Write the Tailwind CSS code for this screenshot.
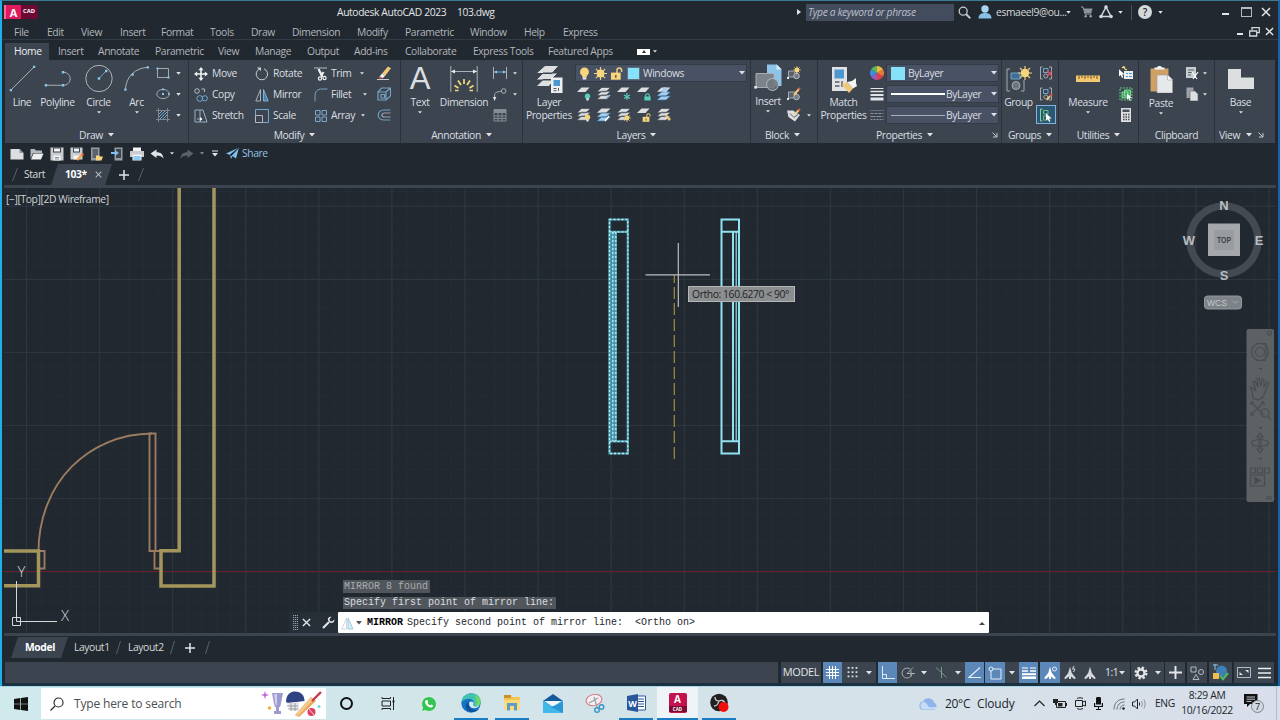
<!DOCTYPE html>
<html lang="en">
<head>
  <meta charset="UTF-8" />
  <meta name="viewport" content="width=device-width, initial-scale=1" />
  <title>Autodesk AutoCAD 2023 - 103.dwg</title>
  <script src="https://cdn.jsdelivr.net/npm/@tailwindcss/browser@4"></script>
</head>
<body class="w-[1280px] h-[720px] overflow-hidden bg-[#22282f] font-['Open_Sans','Noto_Sans',sans-serif] text-[10.3px] tracking-[-0.38px] leading-none text-[#d5d8db]">

  <!-- Icon set -->
  <svg class="hidden">
    <defs>
      <symbol id="tri" viewBox="0 0 6 4"><path d="M0 0h6L3 3.600z" fill="#dfe2e5"/></symbol>
      <symbol id="launch" viewBox="0 0 6 6"><path d="M.5.5l4 4M5 1v4H1" fill="none" stroke="#c8ccd0"/></symbol>
      <symbol id="close" viewBox="0 0 10 10"><path d="M1 1l8 8M9 1L1 9" fill="none" stroke="currentColor" stroke-width="1.500"/></symbol>
      <symbol id="plus" viewBox="0 0 10 10"><path d="M5 0v10M0 5h10" stroke="#e3e5e8" stroke-width="1.500"/></symbol>

      <!-- Draw -->
      <symbol id="line" viewBox="0 0 28 28"><path d="M2 26L26 2" stroke="#aeb4ba"/><path d="M.8 24.800h2.400v2.400H.8zM24.800.8h2.400v2.400h-2.400z" fill="#8ac6ee"/></symbol>
      <symbol id="pline" viewBox="0 0 28 28"><path d="M2 21h18c9 0 10-13 0-13.500" fill="none" stroke="#aeb4ba"/><path d="M.8 19.800h2.400v2.400H.8zM18.500 19.800h2.400v2.400h-2.400zM18.500 6.300h2.400v2.400h-2.400z" fill="#8ac6ee"/></symbol>
      <symbol id="circle" viewBox="0 0 28 28"><circle cx="14" cy="14.500" r="13.200" fill="none" stroke="#aeb4ba"/><path d="M14 14.500l7-7.500" stroke="#5f9fd0"/><path d="M12.800 13.300h2.400v2.400h-2.400zM20 5.800h2.400v2.400H20z" fill="#8ac6ee"/></symbol>
      <symbol id="arc" viewBox="0 0 28 28"><path d="M2.500 25.500C3 12 13 3 25.500 2.500" fill="none" stroke="#aeb4ba"/><path d="M1.300 24.300h2.400v2.400H1.300zM8.800 8.800h2.400v2.400H8.800zM24.500 1.300h2.400v2.400h-2.400z" fill="#8ac6ee"/></symbol>
      <symbol id="rect" viewBox="0 0 14 14"><path d="M1.500 2.500h11v9h-11z" fill="none" stroke="#a3a9b0"/><path d="M.5 1.500h2v2h-2zM11.500 10.500h2v2h-2z" fill="#8ac6ee"/></symbol>
      <symbol id="ellipse" viewBox="0 0 14 14"><ellipse cx="7" cy="7" rx="6.200" ry="4.600" fill="none" stroke="#a3a9b0"/><path d="M6 6h2v2H6zM6 1.600h2v1.600H6zM12.200 6h1.500v2h-1.500z" fill="#8ac6ee"/></symbol>
      <symbol id="hatch" viewBox="0 0 14 14"><path d="M2.500 0v14M11.500 0v14M0 2.500h14M0 11.500h14" stroke="#7f868e"/><path d="M3 6l3-3M3 9l6-6M4 11l7-7M7 11l4-4" stroke="#6fa8d2"/></symbol>

      <!-- Modify -->
      <symbol id="move" viewBox="0 0 14 14"><path d="M7 1v12M1 7h12" stroke="#f0f1f2" stroke-width="1.600"/><path d="M7 0l2.600 3.200H4.400zM7 14l2.600-3.200H4.400zM0 7l3.200-2.600v5.200zM14 7l-3.200-2.600v5.200z" fill="#f0f1f2"/></symbol>
      <symbol id="copy" viewBox="0 0 14 14"><g fill="none"><circle cx="3" cy="3" r="2.300" stroke="#b5bac0"/><path d="M7.500 1h3v3" stroke="#b5bac0"/><circle cx="5.800" cy="10.500" r="2.900" stroke="#6fa8d2"/><circle cx="10.800" cy="10.300" r="2.600" stroke="#6fa8d2"/></g></symbol>
      <symbol id="stretch" viewBox="0 0 14 14"><path d="M1 1h5v12H1zM6 1h3l4 12H6M3 10h5" fill="none" stroke="#9ab0c4"/><path d="M6 8l2.500 2L6 12z" fill="#fff"/></symbol>
      <symbol id="rotate" viewBox="0 0 14 14"><path d="M9 1.800A5.700 5.700 0 1 1 4.500 1.900" fill="none" stroke="#c9cdd1"/><path d="M2 .5h4v3.800z" fill="#c9cdd1"/></symbol>
      <symbol id="mirror" viewBox="0 0 14 14"><path d="M5.500 1.500v11.500H.8z" fill="none" stroke="#a9b0b7"/><path d="M8.500 1.500v11.500h4.700z" fill="#3e84b4" stroke="#8fc0e4" stroke-width=".8"/></symbol>
      <symbol id="scale" viewBox="0 0 14 14"><path d="M.5.5h13v13H.5z" fill="none" stroke="#6fa8d2"/><path d="M.5 6.500h7v7h-7z" fill="#3b444f" stroke="#b5bac0"/></symbol>
      <symbol id="trim" viewBox="0 0 14 14"><path d="M0 1h13" stroke="#b5bac0"/><path d="M4.500 2l4 8M9.500 5L7 9" stroke="#f0f1f2" stroke-width="2.200"/><circle cx="6" cy="11.500" r="1.600" fill="none" stroke="#f0f1f2" stroke-width="1.200"/><circle cx="10.500" cy="11" r="1.600" fill="none" stroke="#f0f1f2" stroke-width="1.200"/></symbol>
      <symbol id="fillet" viewBox="0 0 14 14"><path d="M1 13.500V8C1 3.500 3.500 1 8 1h5.500" fill="none" stroke="#78a4c6"/></symbol>
      <symbol id="array" viewBox="0 0 14 14"><path d="M1.500 1.500h4.500v4.500H1.500zM8 1.500h4.500v4.500H8zM1.500 8h4.500v4.500H1.500zM8 8h4.500v4.500H8z" fill="none" stroke="#7fa9cb"/></symbol>
      <symbol id="erase" viewBox="0 0 14 14"><path d="M0 13.500h12" stroke="#c9cdd1"/><path d="M5 7.500l6-7L14 2.200 8.200 9.800z" fill="#f5c77a"/><path d="M2.500 10.800L5 7.500l3.200 2.300L5.500 12.300z" fill="#f3f3f3"/><path d="M1.500 11.800l2.500 1 1.200-1L2.700 10.200z" fill="#e4573f"/></symbol>
      <symbol id="explode" viewBox="0 0 14 14"><path d="M1 5h8v8H1zM1 5l3.500-4h9v8L9 13M9 5l4.500-4M4 7.500h3.500V11H4z" fill="none" stroke="#78a4c6" stroke-width="1.200"/></symbol>
      <symbol id="offset" viewBox="0 0 14 14"><path d="M13.500 2H6.500C-.5 2-.5 12 6.500 12h7" fill="none" stroke="#6f9dc0" stroke-width="1.200"/><path d="M13.500 5H7.500C4 5 4 9 7.500 9h6" fill="none" stroke="#9aa1a8" stroke-width="1.200"/></symbol>

      <!-- Annotation -->
      <symbol id="dim" viewBox="0 0 28 28"><path d="M.8 1v26M27.200 1v26M1 6.500h26" stroke="#aab0b7"/><path d="M1 6.500l4-2v4zM27 6.500l-4-2v4z" fill="#eceef0"/><path d="M14 14v5M8 15.500l3 4.500M20 15.500l-3 4.500M4.500 20.500l4 2.500M23.500 20.500l-4 2.500M5 25.500h3.500M23 25.500h-3.500" stroke="#f3d77a" stroke-width="1.700"/></symbol>
      <symbol id="lindim" viewBox="0 0 14 14"><path d="M.5 1v12M13.500 1v12" stroke="#aab0b7"/><path d="M1 6h12" stroke="#6fa8d2"/><path d="M1 6l3-1.500v3zM13 6l-3-1.500v3z" fill="#8ac6ee"/></symbol>
      <symbol id="leader" viewBox="0 0 14 14"><path d="M1.500 12V9c0-5 4-3.500 7-5" fill="none" stroke="#aab0b7"/><circle cx="10.700" cy="4" r="2.300" fill="none" stroke="#aab0b7"/><path d="M0 10h3.400l-1.900 4z" fill="#e3e5e8"/></symbol>
      <symbol id="table" viewBox="0 0 14 14"><path d="M1 1.500h12v11.500H1z" fill="none" stroke="#858c94"/><path d="M1 1.500h12v3.500H1z" fill="#858c94"/><path d="M5 5v8M9 5v8M1 8h12M1 10.500h12" stroke="#858c94"/></symbol>

      <!-- Layers -->
      <symbol id="sheets" viewBox="0 0 14 14"><path d="M4.500.5h9L9 4.800H0zM4.500 4.300h9L9 8.600H0zM4.500 8h9L9 12.300H0z" fill="#dcdee0" stroke="#3b444f" stroke-width=".7"/></symbol>
      <symbol id="sheet" viewBox="0 0 14 14"><path d="M4.500.5h8L8.500 5H0z" fill="#dcdee0"/></symbol>
      <symbol id="sheetsblue" viewBox="0 0 14 14"><path d="M4.500.5h9L9 4.800H0z" fill="#dcdee0"/><path d="M4.500 5h9L9 9H0zM4.500 9h9L9 13H0z" fill="#a6d0ee" stroke="#3b6f98" stroke-width=".7"/></symbol>
      <symbol id="layerprops" viewBox="0 0 28 28"><path d="M10 .5h14l-7 8H1zM8 8h15l-7 7H1zM8 14.500h12l-6 7H1z" fill="#dcdee0" stroke="#3b444f"/><path d="M16 12.500h11.500V28H16z" fill="#eceeef"/><path d="M18.500 15h6.500v6h-6.500z" fill="#4b97cf"/><path d="M18.500 23.500h3M18.500 25.700h3M23.500 23v3" stroke="#555c64"/></symbol>
      <symbol id="bulb" viewBox="0 0 14 14"><circle cx="7" cy="5.300" r="4.800" fill="#f6d57c"/><path d="M4.500 8.500h5V11h-5z" fill="#f6d57c"/><path d="M5 11h4v2.500H5z" fill="#e8e8e8"/></symbol>
      <symbol id="sun" viewBox="0 0 14 14"><path d="M7 0v14M0 7h14M2 2l10 10M12 2L2 12" stroke="#f0cf7d" stroke-width="1.200"/><circle cx="7" cy="7" r="4.200" fill="#f6d57c"/></symbol>
      <symbol id="lock" viewBox="0 0 14 14"><path d="M7.500 7V3.500a2.400 2.400 0 0 1 5 0v2" fill="none" stroke="#f0cf7d" stroke-width="1.600"/><path d="M1 6h10.500v7.700H1z" fill="#f6d57c"/><path d="M5.500 8.500h1.500v3H5.500z" fill="#4a5060"/></symbol>
      <symbol id="dot-bulb" viewBox="0 0 6 6"><circle cx="3" cy="2.300" r="2.300" fill="currentColor"/><path d="M2 4h2v2H2z" fill="#e8e8e8"/></symbol>
      <symbol id="dot-lock" viewBox="0 0 6 6"><path d="M1.500 3V1.700a1.500 1.500 0 0 1 3 0V3" fill="none" stroke="currentColor"/><path d="M.3 2.600h5.400V6H.3z" fill="currentColor"/></symbol>

      <!-- Block -->
      <symbol id="insert" viewBox="0 0 28 28"><path d="M13 .5h10l4.500 4.500v17H13z" fill="#8fc4ea"/><path d="M22.500.5v5h5z" fill="#d9edf9"/><path d="M2 9.500h18v14H2z" fill="#7d838b" stroke="#a9adb2"/><circle cx="18.500" cy="20.500" r="6" fill="#70767e" fill-opacity=".85" stroke="#b6babf"/><path d="M.3 22h2.600v2.600H.3z" fill="#e8e8e8"/></symbol>
      <symbol id="blk" viewBox="0 0 14 14"><path d="M1.500 5h8v6h-8z" fill="#59616b" stroke="#a5abb1"/><circle cx="9.500" cy="10" r="2.800" fill="#747b84" stroke="#b6babf"/><path d="M0 11h2v2H0z" fill="#e8e8e8"/></symbol>

      <!-- Properties -->
      <symbol id="match" viewBox="0 0 28 28"><path d="M2 2h15v24H2z" fill="#e0e2e4"/><path d="M4.500 4.500H14v9H4.500z" fill="#4b97cf"/><path d="M5 17h4.500M5 21h4.500M12 16v6" stroke="#555c64" stroke-width="1.300"/><path d="M12 20l5-3 6 6.500-4 4.500z" fill="#f0c878"/><path d="M17 17l5-1 4-3v5l1 3-4 2.500z" fill="#f4f4f4"/></symbol>

      <symbol id="cursor" viewBox="0 0 8 10"><path d="M0 0v8.500l2-1.800L3.500 10 5 9.300 3.600 6.200H6.500z" fill="#fff"/></symbol>
      <symbol id="grp" viewBox="0 0 14 14"><path d="M3.500 1H1.500v12h2M10 1h2.500v12H10" fill="none" stroke="#a5abb1"/><path d="M4.500 2.500h4.500v4h-4.500z" fill="none" stroke="#6fa8d2"/><circle cx="6.800" cy="10" r="2" fill="none" stroke="#a5abb1"/></symbol>

      <symbol id="scaleA" viewBox="0 0 14 14"><path d="M7 .8L8.800 7l4 5-1.200 1.200L8 10.500V13H6v-2.500l-3.600 2.700L1.200 12l4-5z" fill="currentColor"/></symbol>
    </defs>
  </svg>

  <div class="flex flex-col w-[1280px] h-[686px] border-t border-t-[#3a7a92] border-l-2 border-l-[#1fb0ea] border-r-2 border-r-[#1163b0]">

    <!-- Title bar -->
    <header class="flex items-center h-[22px] shrink-0 pl-[2px]">
      <div class="flex items-center h-[14px] w-[34px] bg-[#6b0a32] rounded-[1px]">
        <div class="flex items-center justify-center w-[17px] h-[14px] bg-[#e01a5c] border-l-2 border-l-[#f26a95] text-white font-bold text-[11px] tracking-normal">A</div>
        <span class="pl-[2px] text-white font-bold text-[5.8px] tracking-normal">CAD</span>
      </div>
      <span class="w-[120px] ml-[299px] whitespace-nowrap text-[#e3e5e8]">Autodesk AutoCAD 2023</span>
      <span class="w-[340px] text-[#e3e5e8]">103.dwg</span>
      <svg class="w-[4px] h-[6px] shrink-0" viewBox="0 0 4 6"><path d="M0 0l4 3-4 3z" fill="#e3e5e8"/></svg>
      <div class="flex items-center w-[148px] h-[17px] ml-[5px] pl-[2px] bg-[#434c5d] italic text-[#b9bec8] shrink-0">Type a keyword or phrase</div>
      <svg class="w-[13px] h-[13px] ml-[4px] shrink-0" viewBox="0 0 13 13"><circle cx="5.200" cy="5.200" r="4" fill="none" stroke="#c9cdd1" stroke-width="1.300"/><path d="M8 8l4.300 4.300" stroke="#c9cdd1" stroke-width="1.800"/></svg>
      <svg class="w-[14px] h-[14px] ml-[7px] shrink-0" viewBox="0 0 14 14"><circle cx="7" cy="4" r="3.700" fill="#a8d4f2"/><path d="M.5 13.500C.5 9 4 8 7 8s6.500 1 6.500 5.500z" fill="#86bfe8"/></svg>
      <span class="w-[71px] ml-[4px] shrink-0 whitespace-nowrap">esmaeel9@ou...</span>
      <svg class="w-[5px] h-[3px] shrink-0 -ml-[1px]"><use href="#tri"/></svg>
      <svg class="w-[12px] h-[12px] ml-[10px] shrink-0" viewBox="0 0 12 12"><path d="M0 1h2l2 7h6.500" fill="none" stroke="#9aa1a8"/><path d="M2.500 2.500H11.500L10.300 7H4z" fill="#8d949c"/><circle cx="4.700" cy="10.300" r="1.200" fill="#9aa1a8"/><circle cx="9.700" cy="10.300" r="1.200" fill="#9aa1a8"/></svg>
      <svg class="w-[14px] h-[14px] ml-[6px] shrink-0" viewBox="0 0 14 14"><path d="M7 2L2 11.500h10z" fill="none" stroke="#d5d8db" stroke-width="1.500"/><circle cx="7" cy="2" r="1.800" fill="#d5d8db"/><circle cx="2" cy="11.500" r="1.800" fill="#d5d8db"/><circle cx="12" cy="11.500" r="1.800" fill="#d5d8db"/></svg>
      <svg class="w-[5px] h-[3px] ml-[5px] shrink-0"><use href="#tri"/></svg>
      <span class="w-px h-[15px] ml-[8px] bg-[#4b525b] shrink-0"></span>
      <span class="flex items-center justify-center w-[14px] h-[14px] ml-[6px] rounded-full bg-[#d5d8db] text-[#22282f] font-semibold text-[10px] tracking-normal shrink-0">?</span>
      <svg class="w-[5px] h-[3px] ml-[6px] shrink-0"><use href="#tri"/></svg>
      <span class="w-[7px] h-[2px] ml-[59px] mt-[4px] bg-[#e3e5e8] shrink-0"></span>
      <span class="w-[11px] h-[10px] ml-[12px] border border-t-2 border-[#b5bac0] shrink-0"></span>
      <svg class="w-[10px] h-[10px] ml-[9px] text-[#e3e5e8] shrink-0"><use href="#close"/></svg>
    </header>

    <!-- Menu bar -->
    <nav class="flex items-center h-[17px] shrink-0 pl-[12px] pt-[2px] border-b border-[#333b45] text-[#b1b6bc]">
      <span class="w-[33px]">File</span><span class="w-[34px]">Edit</span><span class="w-[39px]">View</span><span class="w-[41px]">Insert</span><span class="w-[49px]">Format</span><span class="w-[41px]">Tools</span><span class="w-[41px]">Draw</span><span class="w-[65px]">Dimension</span><span class="w-[48px]">Modify</span><span class="w-[65px]">Parametric</span><span class="w-[54px]">Window</span><span class="w-[39px]">Help</span><span>Express</span>
      <span class="w-[6px] h-[2px] ml-auto mt-[4px] bg-[#e3e5e8]"></span>
      <svg class="w-[11px] h-[10px] ml-[6px] -mt-px" viewBox="0 0 11 10"><path d="M3 3V.7h7.300v5H8M.7 4h7v5h-7z" fill="none" stroke="#d5d8db" stroke-width="1.300"/></svg>
      <svg class="w-[9px] h-[9px] ml-[5px] mr-[4px] -mt-px text-[#e3e5e8]"><use href="#close"/></svg>
    </nav>

    <!-- Ribbon tabs -->
    <nav class="flex items-center h-[20px] shrink-0 pl-[3px] pt-[3px] text-[#b1b6bc]">
      <span class="flex items-center pl-[9px] w-[44px] h-[17px] mr-[9px] bg-[#3b444f] text-[#eceef0]">Home</span><span class="w-[40px]">Insert</span><span class="w-[57px]">Annotate</span><span class="w-[63px]">Parametric</span><span class="w-[37px]">View</span><span class="w-[52px]">Manage</span><span class="w-[47px]">Output</span><span class="w-[51px]">Add-ins</span><span class="w-[68px]">Collaborate</span><span class="w-[75px]">Express Tools</span><span class="w-[89px]">Featured Apps</span>
      <span class="flex items-center justify-center w-[13px] h-[6px] bg-white"><svg class="w-[4px] h-[3px]" viewBox="0 0 4 3"><path d="M0 3h4L2 0z" fill="#333"/></svg></span>
      <svg class="w-[4px] h-[3px] ml-[3px]"><use href="#tri"/></svg>
    </nav>

    <!-- Ribbon -->
    <section class="flex h-[83px] shrink-0 ml-[3px] mr-[3px] bg-[#3b444f] text-[#dcdfe2] whitespace-nowrap">

      <!-- Draw -->
      <div class="flex flex-col w-[184px] border-r border-[#2b323b]">
        <div class="flex h-[66px]">
          <div class="flex flex-col items-center w-[34px] pt-[5px]"><svg class="w-[27px] h-[27px]"><use href="#line"/></svg><span class="mt-[5px]">Line</span></div>
          <div class="flex flex-col items-center w-[37px] pt-[5px]"><svg class="w-[27px] h-[27px]"><use href="#pline"/></svg><span class="mt-[5px]">Polyline</span></div>
          <div class="flex flex-col items-center w-[45px] pt-[4px]"><svg class="w-[28px] h-[28px]"><use href="#circle"/></svg><span class="mt-[5px]">Circle</span><svg class="w-[4px] h-[3px] mt-[4px]"><use href="#tri"/></svg></div>
          <div class="flex flex-col items-center w-[31px] pt-[5px]"><svg class="w-[27px] h-[27px]"><use href="#arc"/></svg><span class="mt-[5px]">Arc</span><svg class="w-[4px] h-[3px] mt-[4px]"><use href="#tri"/></svg></div>
          <div class="flex flex-col gap-[7px] pt-[6px] pl-[4px]">
            <div class="flex items-center gap-[6px]"><svg class="w-[14px] h-[14px]"><use href="#rect"/></svg><svg class="w-[5px] h-[3px]"><use href="#tri"/></svg></div>
            <div class="flex items-center gap-[6px]"><svg class="w-[14px] h-[14px]"><use href="#ellipse"/></svg><svg class="w-[5px] h-[3px]"><use href="#tri"/></svg></div>
            <div class="flex items-center gap-[6px]"><svg class="w-[14px] h-[14px]"><use href="#hatch"/></svg><svg class="w-[5px] h-[3px]"><use href="#tri"/></svg></div>
          </div>
        </div>
        <div class="flex items-center justify-center gap-[5px] h-[17px] pt-px">Draw<svg class="w-[6px] h-[4px]"><use href="#tri"/></svg></div>
      </div>

      <!-- Modify -->
      <div class="flex flex-col w-[212px] border-r border-[#2b323b]">
        <div class="flex h-[66px] pt-[3px]">
          <div class="w-[60px] pl-[5px]">
            <div class="flex items-center h-[21px] gap-[4px]"><svg class="w-[14px] h-[14px]"><use href="#move"/></svg>Move</div>
            <div class="flex items-center h-[21px] gap-[4px]"><svg class="w-[14px] h-[14px]"><use href="#copy"/></svg>Copy</div>
            <div class="flex items-center h-[21px] gap-[4px]"><svg class="w-[14px] h-[14px]"><use href="#stretch"/></svg>Stretch</div>
          </div>
          <div class="w-[60px] pl-[6px]">
            <div class="flex items-center h-[21px] gap-[4px]"><svg class="w-[14px] h-[14px]"><use href="#rotate"/></svg>Rotate</div>
            <div class="flex items-center h-[21px] gap-[4px]"><svg class="w-[14px] h-[14px]"><use href="#mirror"/></svg>Mirror</div>
            <div class="flex items-center h-[21px] gap-[4px]"><svg class="w-[14px] h-[14px]"><use href="#scale"/></svg>Scale</div>
          </div>
          <div class="w-[58px] pl-[5px]">
            <div class="flex items-center h-[21px] gap-[3px]"><svg class="w-[14px] h-[14px]"><use href="#trim"/></svg>Trim<svg class="w-[4px] h-[3px] ml-auto mr-[3px]"><use href="#tri"/></svg></div>
            <div class="flex items-center h-[21px] gap-[3px]"><svg class="w-[14px] h-[14px]"><use href="#fillet"/></svg>Fillet<svg class="w-[4px] h-[3px] ml-auto"><use href="#tri"/></svg></div>
            <div class="flex items-center h-[21px] gap-[3px]"><svg class="w-[14px] h-[14px]"><use href="#array"/></svg>Array<svg class="w-[4px] h-[3px] ml-auto mr-[2px]"><use href="#tri"/></svg></div>
          </div>
          <div class="flex flex-col gap-[7px] pl-[10px] pt-[3px]"><svg class="w-[14px] h-[14px]"><use href="#erase"/></svg><svg class="w-[14px] h-[14px]"><use href="#explode"/></svg><svg class="w-[14px] h-[14px]"><use href="#offset"/></svg></div>
        </div>
        <div class="flex items-center justify-center gap-[5px] h-[17px] pt-px">Modify<svg class="w-[6px] h-[4px]"><use href="#tri"/></svg></div>
      </div>

      <!-- Annotation -->
      <div class="flex flex-col w-[122px] border-r border-[#2b323b]">
        <div class="flex h-[66px]">
          <div class="flex flex-col items-center w-[38px] pt-[5px]"><span class="h-[28px] leading-[27px] font-['Liberation_Sans',sans-serif] text-[31px] tracking-normal">A</span><span class="mt-[4px]">Text</span><svg class="w-[4px] h-[3px] mt-[4px]"><use href="#tri"/></svg></div>
          <div class="flex flex-col items-center w-[50px] pt-[5px]"><svg class="w-[28px] h-[28px]"><use href="#dim"/></svg><span class="mt-[4px]">Dimension</span></div>
          <div class="flex flex-col gap-[7px] pt-[6px] pl-[4px]">
            <div class="flex items-center gap-[6px]"><svg class="w-[14px] h-[14px]"><use href="#lindim"/></svg><svg class="w-[4px] h-[3px]"><use href="#tri"/></svg></div>
            <div class="flex items-center gap-[6px]"><svg class="w-[14px] h-[14px]"><use href="#leader"/></svg><svg class="w-[4px] h-[3px]"><use href="#tri"/></svg></div>
            <svg class="w-[14px] h-[14px]"><use href="#table"/></svg>
          </div>
        </div>
        <div class="flex items-center justify-center gap-[5px] h-[17px] pt-px">Annotation<svg class="w-[6px] h-[4px]"><use href="#tri"/></svg></div>
      </div>

      <!-- Layers -->
      <div class="flex flex-col w-[228px] border-r border-[#2b323b]">
        <div class="flex h-[66px]">
          <div class="flex flex-col items-center w-[52px] pt-[5px]"><svg class="w-[28px] h-[28px]"><use href="#layerprops"/></svg><span class="mt-[4px]">Layer</span><span class="mt-[3px]">Properties</span></div>
          <div class="pt-[4px]">
            <div class="flex items-center w-[172px] h-[18px] pl-[2px] bg-[#485264] border border-[#333b47]">
              <svg class="w-[13px] h-[13px]"><use href="#bulb"/></svg>
              <svg class="w-[13px] h-[13px] ml-[3px]"><use href="#sun"/></svg>
              <svg class="w-[13px] h-[13px] ml-[3px]"><use href="#lock"/></svg>
              <span class="w-[13px] h-[13px] ml-[4px] bg-[#86e2fb] border border-[#62707c]"></span>
              <span class="ml-[3px]">Windows</span>
              <svg class="w-[6px] h-[4px] ml-auto mr-px"><use href="#tri"/></svg>
            </div>
            <div class="flex gap-[6px] pl-[2px] mt-[5px]">
              <svg class="w-[14px] h-[14px]"><use href="#sheet"/><use href="#dot-bulb" x="7" y="6" width="7" height="8" class="text-[#58cdb8]"/></svg>
              <svg class="w-[14px] h-[14px]"><use href="#sheets"/><path d="M13 8l-4 4" stroke="#7fb5dc" stroke-width="1.500"/></svg>
              <svg class="w-[14px] h-[14px]"><use href="#sheet"/><path d="M10 6v7M7 8l6 3.500M13 8l-6 3.500" stroke="#58cdb8" stroke-width="1.200"/></svg>
              <svg class="w-[14px] h-[14px]"><use href="#sheet"/><use href="#dot-lock" x="7" y="6" width="7" height="8" class="text-[#58cdb8]"/></svg>
              <svg class="w-[14px] h-[14px]"><use href="#sheetsblue"/><circle cx="8" cy="3" r="2.700" fill="#a6d0ee"/></svg>
            </div>
            <div class="flex gap-[6px] pl-[2px] mt-[7px]">
              <svg class="w-[14px] h-[14px]"><use href="#sheets"/><use href="#dot-bulb" x="7" y="6" width="7" height="8" class="text-[#f6d57c]"/></svg>
              <svg class="w-[14px] h-[14px]"><use href="#sheetsblue"/><path d="M8 13l4-5" stroke="#fff" stroke-width="1.300"/></svg>
              <svg class="w-[14px] h-[14px]"><use href="#sheets"/><use href="#sun" x="6" y="6" width="8" height="8"/></svg>
              <svg class="w-[14px] h-[14px]"><use href="#sheet"/><use href="#lock" x="5" y="5" width="9" height="9"/></svg>
              <svg class="w-[14px] h-[14px]"><use href="#sheets"/><path d="M8 8l2-1 4 4-2 2z" fill="#f0c878"/></svg>
            </div>
          </div>
        </div>
        <div class="flex items-center justify-center gap-[5px] h-[17px] pt-px">Layers<svg class="w-[6px] h-[4px]"><use href="#tri"/></svg></div>
      </div>

      <!-- Block -->
      <div class="flex flex-col w-[67px] border-r border-[#2b323b]">
        <div class="flex h-[66px]">
          <div class="flex flex-col items-center w-[34px] pt-[4px]"><svg class="w-[28px] h-[28px]"><use href="#insert"/></svg><span class="mt-[4px]">Insert</span><svg class="w-[4px] h-[3px] mt-[4px]"><use href="#tri"/></svg></div>
          <div class="flex flex-col gap-[7px] pt-[6px] pl-[2px]">
            <svg class="w-[14px] h-[14px]"><use href="#blk"/><use href="#sun" x="6" y="0" width="8" height="8"/></svg>
            <svg class="w-[14px] h-[14px]"><use href="#blk"/><path d="M7 8l5-6" stroke="#f0c878" stroke-width="2"/><path d="M11.500 2.500L13 .8" stroke="#e4573f" stroke-width="2"/></svg>
            <div class="flex items-center gap-[6px]"><svg class="w-[14px] h-[14px]" viewBox="0 0 14 14"><path d="M0 2.500h6l7 4.500-5 6.500L1.500 9z" fill="#dcdee0"/><path d="M3 5.500l4 4 4-3" fill="none" stroke="#59616b"/><path d="M8 6l4-4" stroke="#f0c878" stroke-width="2"/><path d="M11.500 2.500L13 .8" stroke="#e4573f" stroke-width="2"/></svg><svg class="w-[4px] h-[3px]"><use href="#tri"/></svg></div>
          </div>
        </div>
        <div class="flex items-center justify-center gap-[5px] h-[17px] pt-px pr-[3px]">Block<svg class="w-[6px] h-[4px]"><use href="#tri"/></svg></div>
      </div>

      <!-- Properties -->
      <div class="flex flex-col w-[184px] border-r border-[#2b323b]">
        <div class="flex h-[66px]">
          <div class="flex flex-col items-center w-[51px] pt-[5px]"><svg class="w-[28px] h-[28px]"><use href="#match"/></svg><span class="mt-[4px]">Match</span><span class="mt-[3px]">Properties</span></div>
          <div class="flex flex-col items-center gap-[7px] w-[16px] pt-[6px]">
            <svg class="w-[14px] h-[14px]" viewBox="0 0 14 14"><path d="M7 7V0a7 7 0 0 1 6 3.500z" fill="#f0b93c"/><path d="M7 7l6-3.500a7 7 0 0 1 0 7z" fill="#ec7a37"/><path d="M7 7l6 3.500A7 7 0 0 1 7 14z" fill="#dd3f4d"/><path d="M7 7v7a7 7 0 0 1-6-3.500z" fill="#9b58c0"/><path d="M7 7l-6 3.500a7 7 0 0 1 0-7z" fill="#3b8ee0"/><path d="M7 7L1 3.500A7 7 0 0 1 7 0z" fill="#55b560"/></svg>
            <svg class="w-[14px] h-[14px]" viewBox="0 0 14 14"><path d="M.5 1.500h13" stroke="#e3e5e8"/><path d="M.5 4.500h13" stroke="#e3e5e8" stroke-width="1.500"/><path d="M.5 8h13" stroke="#e3e5e8" stroke-width="2"/><path d="M.5 12h13" stroke="#e3e5e8" stroke-width="3"/></svg>
            <svg class="w-[14px] h-[14px]" viewBox="0 0 14 14"><path d="M.5 2.500h13" stroke="#8d949c" stroke-dasharray="1 1"/><path d="M.5 5.500h13" stroke="#8d949c" stroke-dasharray="3 1"/><path d="M.5 8.500h13" stroke="#8d949c" stroke-dasharray="5 1"/><path d="M.5 11.500h13" stroke="#8d949c" stroke-dasharray="2 1"/></svg>
          </div>
          <div class="flex flex-col gap-[3px] pt-[4px] pl-px">
            <div class="flex items-center w-[113px] h-[18px] pl-[4px] bg-[#485264] border border-[#333b47]"><span class="w-[14px] h-[13px] bg-[#86e2fb]"></span><span class="ml-[3px]">ByLayer</span><svg class="w-[6px] h-[4px] ml-auto mr-px"><use href="#tri"/></svg></div>
            <div class="flex items-center w-[113px] h-[18px] pl-[4px] bg-[#485264] border border-[#333b47]"><span class="w-[54px] h-[2px] bg-white"></span><span class="ml-px">ByLayer</span><svg class="w-[6px] h-[4px] ml-auto mr-px"><use href="#tri"/></svg></div>
            <div class="flex items-center w-[113px] h-[18px] pl-[4px] bg-[#485264] border border-[#333b47]"><span class="w-[54px] h-px bg-[#a9aeb8]"></span><span class="ml-px">ByLayer</span><svg class="w-[6px] h-[4px] ml-auto mr-px"><use href="#tri"/></svg></div>
          </div>
        </div>
        <div class="flex items-center h-[17px] pt-px pl-[58px]">Properties<svg class="w-[6px] h-[4px] ml-[5px]"><use href="#tri"/></svg><svg class="w-[6px] h-[6px] ml-auto mr-[3px]"><use href="#launch"/></svg></div>
      </div>

      <!-- Groups -->
      <div class="flex flex-col w-[57px] border-r border-[#2b323b]">
        <div class="flex h-[66px]">
          <div class="flex flex-col items-center w-[33px] pt-[5px]"><svg class="w-[28px] h-[28px]" viewBox="0 0 28 28"><path d="M5 4H2v22h3M16 26h3V15" fill="none" stroke="#a5abb1"/><path d="M6 8h9v6H6z" fill="#426d90" stroke="#6fa8d2"/><circle cx="11" cy="20.500" r="4" fill="#70767e" stroke="#a5abb1"/><use href="#sun" x="13" y="1" width="14" height="14"/></svg><span class="mt-[4px]">Group</span></div>
          <div class="flex flex-col items-center w-[22px] pt-[6px]">
            <svg class="w-[14px] h-[14px]"><use href="#grp"/><path d="M8 5l5 5M13 5l-5 5" stroke="#dc4c64" stroke-width="1.500"/></svg>
            <svg class="w-[14px] h-[14px] mt-[7px]"><use href="#grp"/><path d="M8 13l3-4" stroke="#f0c878" stroke-width="2"/><path d="M11 9l2-2" stroke="#e4573f" stroke-width="2"/></svg>
            <div class="flex items-center justify-center w-[20px] h-[19px] mt-[4px] bg-[#2c5672] border border-[#7fb5dc]"><svg class="w-[14px] h-[14px]"><path d="M3.500 1H1.500v12h2" fill="none" stroke="#8fd0a0"/><path d="M4.500 2.500h4.500v3.500H4.500zM4.500 8h4v4h-4z" fill="none" stroke="#5fc57d"/><use href="#cursor" x="7" y="5" width="7" height="9"/></svg></div>
          </div>
        </div>
        <div class="flex items-center justify-center gap-[5px] h-[17px] pt-px">Groups<svg class="w-[6px] h-[4px]"><use href="#tri"/></svg></div>
      </div>

      <!-- Utilities -->
      <div class="flex flex-col w-[80px] border-r border-[#2b323b]">
        <div class="flex h-[66px]">
          <div class="flex flex-col items-center w-[58px] pt-[5px]"><svg class="w-[28px] h-[28px]" viewBox="0 0 28 28"><path d="M2 10.500h24v6.500H2z" fill="#f3c86f"/><path d="M5 11v3M8 11v2M11 11v3M14 11v2M17 11v3M20 11v2M23 11v3" stroke="#6d5526"/></svg><span class="mt-[4px]">Measure</span><svg class="w-[4px] h-[3px] mt-[4px]"><use href="#tri"/></svg></div>
          <div class="flex flex-col gap-[7px] pt-[6px] pl-[2px]">
            <svg class="w-[14px] h-[14px]"><path d="M5 5h9v8H5z" fill="#eceef0"/><path d="M7 7.500h2M10 7.500h3M7 10.500h2M10 10.500h3" stroke="#4b97cf"/><use href="#cursor" x="0" y="3" width="7" height="9"/><path d="M3 2l2-1.500L6 3l2 1" fill="none" stroke="#f6d57c" stroke-width="1.300"/></svg>
            <svg class="w-[14px] h-[14px]"><path d="M1 1h12v12H1z" fill="none" stroke="#5fc57d" stroke-dasharray="2 1"/><path d="M3 5h6v6H3zM5.500 3h6v6h-6z" fill="#46a766" stroke="#7edc98"/><use href="#cursor" x="8" y="6" width="6" height="8"/></svg>
            <svg class="w-[14px] h-[14px]" viewBox="0 0 14 14"><path d="M2 0h10v14H2z" fill="#dcdee0"/><path d="M3.500 1.500h7v2.500h-7z" fill="#4b525b"/><path d="M4 6.500h7M4 9h7M4 11.500h7" stroke="#4b525b" stroke-width="1.400" stroke-dasharray="1.500 1"/></svg>
          </div>
        </div>
        <div class="flex items-center justify-center gap-[5px] h-[17px] pt-px">Utilities<svg class="w-[6px] h-[4px]"><use href="#tri"/></svg></div>
      </div>

      <!-- Clipboard -->
      <div class="flex flex-col w-[76px] border-r border-[#2b323b]">
        <div class="flex h-[66px]">
          <div class="flex flex-col items-center w-[44px] pt-[5px]"><svg class="w-[28px] h-[28px]" viewBox="0 0 28 28"><path d="M3.500 3.500h18v23h-18z" fill="#cf9f64"/><path d="M7.500 4.500V2.500H10C10.500.5 14.500.5 15 2.500h2.500v2z" fill="#f4f4f4"/><path d="M10 10h11l4.500 4.500v13.500H10z" fill="#e6e8e9" stroke="#9a9ea3" stroke-width=".6"/><path d="M20.500 10v5h5z" fill="#fff" stroke="#9a9ea3" stroke-width=".6"/></svg><span class="mt-[5px]">Paste</span><svg class="w-[4px] h-[3px] mt-[4px]"><use href="#tri"/></svg></div>
          <div class="flex flex-col gap-[7px] pt-[6px] pl-[2px]">
            <div class="flex items-center gap-[4px]"><svg class="w-[14px] h-[14px]" viewBox="0 0 14 14"><path d="M1 1h10v11H1z" fill="#c9cdd1"/><path d="M3 4h6M3 6.500h4M3 9h3" stroke="#59616b"/><path d="M7 6l5 7M13 6l-5 7" stroke="#fff" stroke-width="1.200"/></svg><svg class="w-[4px] h-[3px]"><use href="#tri"/></svg></div>
            <div class="flex items-center gap-[4px]"><svg class="w-[14px] h-[14px]" viewBox="0 0 14 14"><path d="M1.500.5h7v10.500h-7z" fill="#9da3a9"/><path d="M5 4h5l3 3v7H5z" fill="#dcdee0" stroke="#59616b" stroke-width=".6"/></svg><svg class="w-[4px] h-[3px]"><use href="#tri"/></svg></div>
          </div>
        </div>
        <div class="flex items-center justify-center h-[17px] pt-px">Clipboard</div>
      </div>

      <!-- View -->
      <div class="flex flex-col w-[60px]">
        <div class="flex flex-col items-center h-[66px] pt-[5px] pr-[9px]"><svg class="w-[28px] h-[28px]" viewBox="0 0 28 28"><path d="M1 4h13v8.500h13V24H1z" fill="#dcdee0"/></svg><span class="mt-[4px]">Base</span><svg class="w-[4px] h-[3px] mt-[4px]"><use href="#tri"/></svg></div>
        <div class="flex items-center h-[17px] pt-px pl-[4px]">View<svg class="w-[6px] h-[4px] ml-[6px]"><use href="#tri"/></svg><svg class="w-[6px] h-[6px] ml-[6px]"><use href="#launch"/></svg></div>
      </div>
    </section>

    <!-- Quick access toolbar -->
    <section class="flex items-center h-[21px] shrink-0 pl-[8px] gap-[6px]">
      <svg class="w-[14px] h-[14px]" viewBox="0 0 14 14"><path d="M.5 2h9l4 4v6.500H.5z" fill="#dcdee0"/><path d="M9.500 2v4h4z" fill="#8d949c"/></svg>
      <svg class="w-[14px] h-[14px]" viewBox="0 0 14 14"><path d="M.5 2h4l1.500 1.500h6V6H3L.5 12z" fill="#b5bac0"/><path d="M3.500 6.500h10l-2.500 6H1z" fill="#eceef0"/></svg>
      <svg class="w-[14px] h-[14px]" viewBox="0 0 14 14"><path d="M.5.5h13v13H.5z" fill="#c9cdd1"/><path d="M3 .5h8v5H3z" fill="#3d444d"/><path d="M4 1.500h6v3H4zM3.500 8.500h7v5h-7z" fill="#f4f4f4"/><path d="M5 10.500h4M5 12h4" stroke="#8d949c"/></svg>
      <svg class="w-[14px] h-[14px]" viewBox="0 0 14 14"><path d="M.5.5h12v12H.5z" fill="#c9cdd1"/><path d="M3 .5h7v5H3z" fill="#3d444d"/><path d="M4 1.500h5v3H4zM3.500 8.500H9v4H3.500z" fill="#f4f4f4"/><path d="M7 13l5-5" stroke="#f0a84a" stroke-width="2.400"/><path d="M12 8l1.500-1.500" stroke="#e4573f" stroke-width="2.400"/></svg>
      <svg class="w-[14px] h-[14px]" viewBox="0 0 14 14"><path d="M1 .5h8.500v13H1z" fill="#969ca3"/><path d="M2.500 2H8v9H2.500z" fill="#5a626c"/><path d="M6 8.500h3l1 1h3l-1.500 4H6z" fill="#f6d57c"/></svg>
      <svg class="w-[14px] h-[14px]" viewBox="0 0 14 14"><path d="M4.500.5h8v13h-8z" fill="#969ca3"/><path d="M6 2h5v9H6z" fill="#3d444d"/><path d="M1 5h4V3l4 3-4 3V7H1z" fill="#7fc0ee"/></svg>
      <svg class="w-[14px] h-[14px]" viewBox="0 0 14 14"><path d="M3 .5h8V4H3z" fill="#f4f4f4"/><path d="M0 4h14v6H0z" fill="#c9cdd1"/><path d="M2.500 7.500h9v6h-9z" fill="#f4f4f4"/><path d="M3.500 9h7v4h-7z" fill="#8fcbf0"/></svg>
      <svg class="w-[14px] h-[14px]" viewBox="0 0 14 14"><path d="M.5 6.500L6.500 2.500v2.700c4.500 0 6.500 2 7 6.300-1.500-2-3.500-3-7-3v2.500z" fill="#e3e5e8"/></svg>
      <svg class="w-[4px] h-[3px]"><use href="#tri"/></svg>
      <svg class="w-[14px] h-[14px]" viewBox="0 0 14 14"><path d="M13.500 6.500l-6-4v2.700c-4.500 0-6.500 2-7 6.300 1.500-2 3.500-3 7-3v2.500z" fill="#59616b"/></svg>
      <svg class="w-[4px] h-[3px] opacity-60"><use href="#tri"/></svg>
      <svg class="w-[6px] h-[7px] ml-[2px]" viewBox="0 0 6 7"><path d="M0 1h6" stroke="#e3e5e8"/><path d="M0 3h6L3 6.500z" fill="#e3e5e8"/></svg>
      <span class="flex items-center gap-[3px] ml-[2px] text-[#8ec4e8]"><svg class="w-[13px] h-[13px]" viewBox="0 0 13 13"><path d="M0 6.500L13 .5 10 11.500 6.500 9 5 12 4 8z" fill="#7fc0ee"/><path d="M4 8l9-7.500L5 9" stroke="#22282f" stroke-width=".6"/></svg>Share</span>
    </section>

    <!-- Drawing tabs -->
    <section class="flex items-center h-[21px] shrink-0">
      <svg class="w-[6px] h-[13px] ml-[10px]" viewBox="0 0 6 13"><path d="M5.500 0L.5 13" stroke="#59616b"/></svg>
      <span class="w-[27px] ml-[6px]">Start</span>
      <div class="flex items-center h-[21px] w-[61px] pl-[14px] bg-[#3b444f] text-white font-bold [clip-path:polygon(7px_0,100%_0,54px_100%,0_100%)]"><span class="w-[30px]">103*</span><svg class="w-[7px] h-[7px] text-[#b5bac0]"><use href="#close"/></svg></div>
      <svg class="w-[10px] h-[10px] ml-[7px]"><use href="#plus"/></svg>
      <svg class="w-[6px] h-[13px] ml-[9px]" viewBox="0 0 6 13"><path d="M5.500 0L.5 13" stroke="#59616b"/></svg>
    </section>
    <div class="h-[3px] shrink-0 ml-[2px] mr-[2px] bg-[#3b444f]"></div>

    <!-- Model space -->
    <main class="relative h-[445px] shrink-0 ml-[2px] mr-[2px] overflow-hidden bg-[#212830]">
      <svg class="block w-[1272px] h-[445px]" viewBox="4 188 1272 445">
        <defs>
          <pattern id="minor" x="26" y="205.800" width="14.620" height="14.620" patternUnits="userSpaceOnUse"><path d="M0 .5h14.620M.5 0v14.620" stroke="#242b34"/></pattern>
          <pattern id="major" x="26" y="205.800" width="73.080" height="73.080" patternUnits="userSpaceOnUse"><path d="M0 .5h73.080M.5 0v73.080" stroke="#2e3640"/></pattern>
        </defs>
        <path d="M4 188h1272v445H4z" fill="url(#minor)"/>
        <path d="M4 188h1272v445H4z" fill="url(#major)"/>
        <path d="M4 571.500h1272" stroke="#6a2029"/>

        <!-- Door -->
        <g fill="none" stroke="#9c7b5f" stroke-width="1.900">
          <path d="M38.500 551C39 483 88 434 152 433.500"/>
          <path d="M149.500 433.500h6V551h-6zM154.500 551h6.500v17.500h-6.500zM39 551h5.500v17.500H39z"/>
        </g>
        <!-- Walls -->
        <g fill="none" stroke="#a3955c" stroke-width="3.500">
          <path d="M179.200 188v362.800h-18.200V586h53V188"/>
          <path d="M4 551h34.500v34.800H4"/>
        </g>

        <!-- Selected window -->
        <path d="M608.800 232h7.600v209h-7.600z" fill="#43899a"/>
        <g fill="none" stroke="#4fa3b5" stroke-width="2.200"><path d="M609.500 219.500h18.300v234h-18.300zM609.500 231.800h18.300M609.500 441.300h18.300M612.800 232v209M615.800 232v209"/></g>
        <g fill="none" stroke="#b9eef7" stroke-width="1.300" stroke-dasharray="2 2"><path d="M609.500 219.500h18.300v234h-18.300zM609.500 231.800h18.300M609.500 441.300h18.300M612.800 232v209M615.800 232v209"/></g>

        <!-- Mirrored preview -->
        <g fill="none" stroke="#8fe3f0" stroke-width="2"><path d="M721.500 219.500h17.500v234h-17.500zM721.500 231.800h17.500M721.500 441.300h17.500M733 232v209"/><path d="M736.200 232v209" stroke-width="1.200"/></g>

        <!-- Rubber band and cursor -->
        <path d="M674.300 275v185" stroke="#9a873f" stroke-width="1.300" stroke-dasharray="12 4" stroke-dashoffset="4"/>
        <path d="M678.300 243v64M645.500 274.800h64.500" stroke="#b9bebf" stroke-width="1.200"/>

        <!-- UCS icon -->
        <g fill="none" stroke="#d5d8db"><path d="M16.500 581v40.500H57M12.500 617.500h8v8h-8z"/></g>
        <text x="17.500" y="577" font-size="15" font-weight="300" letter-spacing="0" fill="#d5d8db">Y</text>
        <text x="61" y="621" font-size="15" font-weight="300" letter-spacing="0" fill="#d5d8db">X</text>

        <!-- View cube -->
        <circle cx="1224" cy="240" r="34" fill="none" stroke="#434a52" stroke-width="7.500"/>
        <path d="M1208 223.500h32V256h-32z" fill="#a5a8aa"/>
        <path d="M1214 230h20v20h-20z" fill="#999c9f"/>
        <g font-family="Liberation Sans" font-weight="700" text-anchor="middle" letter-spacing="0" fill="#b9bdc0" font-size="13">
          <text x="1224" y="209.500">N</text><text x="1224" y="280">S</text><text x="1189" y="244.500">W</text><text x="1259" y="244.500">E</text>
        </g>
        <text x="1224" y="243" font-family="Liberation Sans" font-weight="700" font-size="8.500" letter-spacing="0" text-anchor="middle" textLength="14" lengthAdjust="spacingAndGlyphs" fill="#3d4349">TOP</text>
        <rect x="1204.500" y="296" width="37" height="13" rx="3" fill="#7d8388" stroke="#93989c"/>
        <text x="1207" y="305.500" font-family="Liberation Sans" font-size="8.500" letter-spacing="0" fill="#c5c9cc">WCS</text>
        <path d="M1233 301l2.500 2 2.500-2" fill="none" stroke="#a5a9ad"/>

        <!-- Navigation bar -->
        <rect x="1246.500" y="329" width="27.500" height="173" rx="2" fill="#5d6164"/>
        <g fill="none" stroke="#474d52" stroke-width="1.200">
          <circle cx="1269.500" cy="333" r="2"/>
          <circle cx="1260" cy="352" r="8.500"/><circle cx="1260" cy="352" r="4.500"/><path d="M1256 343.500h10M1256 360.500h10M1266 343v16"/>
          <path d="M1252 391l-2-4 3 1 3 3-3-9 2-1 3 6-1-8 2-1 2 8 1-7 2 1v7l3-5 2 1-4 9-2 5-5 3-5-2z"/>
          <path d="M1251 402l13 13M1264 402l-13 13M1251 405v-3h3M1261 402h3v3M1251 412v3h3"/><circle cx="1265" cy="413" r="4"/><path d="M1268 416l3 4"/>
          <ellipse cx="1260" cy="443" rx="8.500" ry="3.500"/><path d="M1260 433l3 4h-2v12h2l-3 4-3-4h2v-12h-2z"/>
          <path d="M1250.500 468h5v5h-5zM1257.500 468h5v5h-5zM1264.500 468h5v5h-5zM1250.500 475h14v11h-14z"/><path d="M1255 477.500l5 3-5 3z" fill="#474d52"/>
          <path d="M1266 497h6M1266 499h6"/>
        </g>
        <path d="M1258.500 368h4l-2 2zM1258.500 427h4l-2 2zM1258.500 458h4l-2 2z" fill="#444a4f"/>
      </svg>

      <div class="absolute left-[2px] top-[5px] leading-[12px] text-[#d0d3d6]">[−][Top][2D Wireframe]</div>
      <div class="absolute left-[684px] top-[98px] flex items-center w-[107px] h-[16px] pl-[3px] bg-[#8b8e8f] border border-[#b4b6b7] text-[#1f2328] whitespace-nowrap">Ortho: 160.6270 &lt; 90°</div>

      <!-- Command line -->
      <div class="absolute left-[339px] top-[392px] font-['Liberation_Mono',monospace] text-[10px] leading-[12px] tracking-normal">
        <div class="w-[87px] pl-px pt-px bg-[#50565b] text-[#a7abae]">MIRROR 8 found</div>
        <div class="w-[213px] pl-px mt-[4px] bg-[#50565b] text-[#dcdee0] whitespace-nowrap">Specify first point of mirror line:</div>
      </div>
      <div class="absolute left-[286px] top-[424px] flex items-center w-[700px] h-[21px]">
        <div class="flex items-center w-[48px] h-[21px] pl-[3px] bg-[#262e38]">
          <svg class="w-[5px] h-[15px]" viewBox="0 0 5 15"><path d="M.7 0v15M2.700 0v15M4.700 0v15" stroke="#b5bac0" stroke-dasharray="1 1"/></svg>
          <svg class="w-[9px] h-[9px] ml-[4px] text-[#e3e5e8]"><use href="#close"/></svg>
          <svg class="w-[13px] h-[13px] ml-[11px]" viewBox="0 0 13 13"><path d="M1 12l6-6" stroke="#e3e5e8" stroke-width="2.200"/><path d="M12.300 3.500L10 5.500 8 5l-.5-2L9.500.8C7 .3 5.500 2 6 4.500L8.500 7c2.500.5 4.300-1 3.800-3.500z" fill="#e3e5e8"/></svg>
        </div>
        <div class="flex items-center w-[651px] h-[21px] pl-[3px] pr-[4px] pt-px rounded-[1px] bg-white font-['Liberation_Mono',monospace] text-[10px] tracking-normal text-[#22272c] whitespace-pre">
          <svg class="w-[13px] h-[13px]" viewBox="0 0 13 13"><path d="M5.500 1v11H.8z" fill="none" stroke="#d0d6da"/><path d="M7 1v11h5z" fill="#d3edf6" stroke="#9fcbdc"/></svg>
          <svg class="w-[6px] h-[4px] ml-[2px] mr-[5px]" viewBox="0 0 6 4"><path d="M0 0h6L3 3.600z" fill="#555"/></svg>
          <span class="w-[40px] font-bold text-black">MIRROR</span><span>Specify second point of mirror line:  &lt;Ortho on&gt;</span>
          <svg class="w-[6px] h-[3px] ml-auto" viewBox="0 0 6 3"><path d="M0 3h6L3 0z" fill="#444"/></svg>
        </div>
      </div>
    </main>
    <div class="h-[3px] shrink-0 ml-[2px] mr-[2px] bg-[#3b444f]"></div>

    <!-- Layout tabs -->
    <section class="flex items-center h-[25px] shrink-0 pl-[9px] pb-[2px]">
      <div class="flex items-center h-[21px] w-[57px] pl-[14px] bg-[#3b444f] text-white font-bold [clip-path:polygon(7px_0,100%_0,50px_100%,0_100%)]">Model</div>
      <span class="w-[42px] ml-[6px]">Layout1</span>
      <svg class="w-[5px] h-[13px]" viewBox="0 0 5 13"><path d="M4.500 0L.5 13" stroke="#59616b"/></svg>
      <span class="w-[42px] ml-[7px]">Layout2</span>
      <svg class="w-[5px] h-[13px]" viewBox="0 0 5 13"><path d="M4.500 0L.5 13" stroke="#59616b"/></svg>
      <svg class="w-[10px] h-[10px] ml-[10px]"><use href="#plus"/></svg>
      <svg class="w-[5px] h-[13px] ml-[10px]" viewBox="0 0 5 13"><path d="M4.500 0L.5 13" stroke="#59616b"/></svg>
    </section>

    <!-- Status bar -->
    <footer class="flex h-[21px] shrink-0 pl-[3px] mt-px text-[#e3e5e8]">
      <div class="w-[773px] bg-[#3b444f]"></div>
      <div class="flex items-center justify-center w-[40px] ml-[3px] pb-[2px] bg-[#3b444f] text-[11px]">MODEL</div>
      <div class="flex items-center justify-center w-[19px] ml-[2px] bg-[#5b88b8]"><svg class="w-[13px] h-[13px]" viewBox="0 0 13 13"><path d="M3.500 0v13M6.500 0v13M9.500 0v13M0 3.500h13M0 6.500h13M0 9.500h13" stroke="#fff"/></svg></div>
      <div class="flex items-center w-[34px] pl-[5px] bg-[#3b444f]"><svg class="w-[11px] h-[11px]" viewBox="0 0 11 11"><path d="M1.500 0v11M5.500 0v11M9.500 0v11" stroke="#dfe2e5" stroke-width="1.800" stroke-dasharray="1.800 2.400"/></svg><svg class="w-[6px] h-[4px] ml-[8px]"><use href="#tri"/></svg></div>
      <div class="flex items-center justify-center w-[19px] ml-[2px] bg-[#5b88b8]"><svg class="w-[14px] h-[14px]" viewBox="0 0 14 14"><path d="M1.500 0v12.500H14M1.500 8.500h4v4" fill="none" stroke="#dfeaf4"/></svg></div>
      <div class="flex items-center w-[34px] pl-[4px] bg-[#3b444f]"><svg class="w-[14px] h-[14px]" viewBox="0 0 14 14"><path d="M9 3A5 5 0 1 0 11 8M6 7.500h8M6 7.500l6-6M10 4.500v6" fill="none" stroke="#a9aeb4"/></svg><svg class="w-[6px] h-[4px] ml-[6px]"><use href="#tri"/></svg></div>
      <div class="flex items-center w-[34px] pl-[4px] bg-[#3b444f]"><svg class="w-[13px] h-[13px]" viewBox="0 0 13 13"><path d="M6.500 1v11" stroke="#69a872"/><path d="M1 1.500l5.500 5 5 5" fill="none" stroke="#858c94"/></svg><svg class="w-[6px] h-[4px] ml-[7px]"><use href="#tri"/></svg></div>
      <div class="flex items-center justify-center w-[19px] bg-[#5b88b8]"><svg class="w-[13px] h-[13px]" viewBox="0 0 13 13"><path d="M12 1.500L1 11.500h12" fill="none" stroke="#e6eef6" stroke-width="1.200"/></svg></div>
      <div class="flex items-center justify-center w-[20px] ml-px bg-[#5b88b8]"><svg class="w-[14px] h-[14px]" viewBox="0 0 14 14"><path d="M5 3h8v10H3V5" fill="none" stroke="#e6eef6"/><circle cx="3" cy="3" r="2" fill="none" stroke="#e6eef6"/></svg></div>
      <div class="flex items-center justify-center w-[14px] bg-[#3b444f]"><svg class="w-[6px] h-[4px]"><use href="#tri"/></svg></div>
      <div class="flex items-center justify-center w-[19px] bg-[#5b88b8]"><svg class="w-[14px] h-[12px]" viewBox="0 0 14 12"><path d="M0 1h6M8 1h6" stroke="#fff"/><path d="M0 4h6M8 4h6" stroke="#fff" stroke-width="1.500"/><path d="M0 7.200h14" stroke="#fff" stroke-width="2"/><path d="M0 10.700h14" stroke="#fff" stroke-width="2.500"/></svg></div>
      <div class="flex items-center justify-center w-[20px] ml-[2px] bg-[#5b88b8]"><svg class="w-[14px] h-[14px] text-white"><use href="#scaleA"/><circle cx="11.500" cy="3" r="2" fill="none" stroke="#e6eef6"/></svg></div>
      <div class="flex items-center w-[70px] pl-[3px] bg-[#3b444f]">
        <svg class="w-[14px] h-[14px] text-[#d5d8db]"><use href="#scaleA"/><path d="M11 0l-1.500 3H12l-1.500 3" fill="none" stroke="#d5d8db"/></svg>
        <svg class="w-[14px] h-[14px] ml-[6px] text-[#d5d8db]"><use href="#scaleA"/></svg>
        <span class="w-[14px] ml-[8px] pb-px">1:1</span>
        <svg class="w-[6px] h-[4px]"><use href="#tri"/></svg>
      </div>
      <div class="flex items-center w-[33px] pl-[3px] ml-px bg-[#3b444f]"><svg class="w-[14px] h-[14px]" viewBox="0 0 14 14"><circle cx="7" cy="7" r="5.300" fill="none" stroke="#e3e5e8" stroke-width="2.400" stroke-dasharray="2.400 1.760"/><circle cx="7" cy="7" r="3.500" fill="none" stroke="#e3e5e8" stroke-width="2.300"/></svg><svg class="w-[6px] h-[4px] ml-[7px]"><use href="#tri"/></svg></div>
      <div class="flex items-center justify-center w-[20px] ml-px bg-[#3b444f]"><svg class="w-[13px] h-[13px]"><use href="#plus"/></svg></div>
      <div class="flex items-center justify-center w-[20px] ml-[2px] bg-[#3b444f]"><svg class="w-[14px] h-[14px]" viewBox="0 0 14 14"><path d="M1 1h5v5H1zM6 8.500L9 13.500H3z" fill="none" stroke="#b5bac0"/><circle cx="11" cy="6" r="2.500" fill="none" stroke="#b5bac0"/></svg></div>
      <div class="flex items-center justify-center w-[23px] ml-[2px] bg-[#3b444f]"><svg class="w-[17px] h-[17px]" viewBox="0 0 17 17"><circle cx="9.500" cy="7" r="5.500" fill="#3f7fb8"/><path d="M1 1h5M3 0v6" stroke="#8fc4ea"/><path d="M1 9h6v6H1z" fill="#f0bf4c"/><path d="M8 12l3 3 5-6" fill="none" stroke="#4fb763" stroke-width="2.400"/></svg></div>
      <div class="flex items-center w-[40px] pl-[3px] ml-[2px] bg-[#3b444f]"><svg class="w-[14px] h-[11px]" viewBox="0 0 14 11"><path d="M.5.5h13v10H.5z" fill="none" stroke="#b5bac0"/><path d="M8 3h3.500v3zM6 8H2.500V5z" fill="#e3e5e8"/></svg><svg class="w-[13px] h-[12px] ml-[7px]" viewBox="0 0 13 12"><path d="M0 1.500h13M0 6h13M0 10.500h13" stroke="#eceef0" stroke-width="1.500"/></svg></div>
    </footer>
    <div class="grow bg-[#1c313f]"></div>
  </div>

  <!-- Windows taskbar -->
  <footer class="flex items-center w-[1280px] h-[34px] border-t border-[#a9d8ee] bg-linear-to-r from-[#cfe9ec] via-[#d3e4e9] to-[#d9deea] text-[#20262b]">
    <div class="flex items-center justify-center w-[41px]"><svg class="w-[14px] h-[14px]" viewBox="0 0 14 14"><path d="M0 2l6.300-.9v5.600H0zM7 1l7-1v6.700H7zM0 7.300h6.300v5.600L0 12zM7 7.300h7V14l-7-1z" fill="#111"/></svg></div>
    <div class="flex items-center w-[285px] h-[31px] pl-[9px] bg-white">
      <svg class="w-[14px] h-[14px]" viewBox="0 0 14 14"><circle cx="8.500" cy="5.500" r="4.500" fill="none" stroke="#2b2f33" stroke-width="1.200"/><path d="M5 9L.5 13.500" stroke="#2b2f33" stroke-width="1.200"/></svg>
      <span class="w-[187px] ml-[10px] text-[12px] tracking-[-0.15px] text-[#4a4f54]">Type here to search</span>
      <svg class="w-[62px] h-[28px]" viewBox="0 0 62 28"><path d="M4 1l1 3 3 1-3 1-1 3-1-3-3-1 3-1z" fill="#c767dd"/><circle cx="8.500" cy="18" r="1.800" fill="#eeb53a"/><path d="M11 3h11l-2.500 13-1.500 1.500V21h2v3h-7v-3h2v-3.500L13.500 16z" fill="#9b9bd0"/><path d="M13 4h3v11h-1.500z" fill="#d0d0ee"/><path d="M25 12C25 4 30 1.500 34 1.500c6 0 9.500 4 9.500 9.500L27 13z" fill="#2e4482"/><path d="M26 13l12-1v8c-6 3-11 0-12-7z" fill="#e8e6e6"/><path d="M26 16h11M27 19h10M30 13v8M34 13v8" stroke="#8b9098" stroke-width=".8"/><path d="M34 25L50 7l5 4-17 16z" fill="#e8a860"/><path d="M35 24L50 7l3 2-16 17z" fill="#f6c98a"/><path d="M51 11l9-9" stroke="#c23a50" stroke-width="2.400"/><circle cx="50.500" cy="22" r="4" fill="#dc3e60"/><path d="M48 19l5 6" stroke="#fff" stroke-width=".8"/><circle cx="58" cy="16.500" r="1.500" fill="#6fd3e4"/></svg>
    </div>
    <div class="flex items-center justify-center w-[41px]"><span class="w-[13px] h-[13px] rounded-full border-2 border-[#111]"></span></div>
    <div class="flex items-center justify-center w-[41px]"><svg class="w-[14px] h-[13px]" viewBox="0 0 14 13"><path d="M1 1.500V0M1 1.500h8.500V0M1 11.500V13M1 11.500h8.500V13M1 4h8.500v5H1zM12.500 0v13" fill="none" stroke="#222"/><path d="M11.500 3.500h2v2h-2z" fill="#222"/></svg></div>
    <div class="flex items-center justify-center w-[42px]"><svg class="w-[16px] h-[16px]" viewBox="0 0 16 16"><path d="M.5 15.500l1-4A7.400 7.400 0 1 1 4.500 14.500z" fill="#35c355" stroke="#e9f7ec" stroke-width=".8"/><path d="M5 4.200l1.300-.2.900 2-.7 1c.7 1.300 1.500 2 2.700 2.500l1-1.100 1.900.9c0 1.900-1.600 2.500-2.900 2.200C6.500 10.800 4.300 8.500 4 6c0-.8.400-1.400 1-1.800z" fill="#fff"/></svg></div>
    <div class="flex flex-col items-center w-[41px] h-[33px] pt-[6px]"><svg class="w-[20px] h-[20px]" viewBox="0 0 20 20"><circle cx="10" cy="10" r="9.700" fill="#1673c4"/><path d="M.5 9C1.500 3 6 .3 10.500.3c6 0 9.200 4.500 9.200 8 0 3.200-2.500 5-5.200 5-2.300 0-3-1-2.300-2.100C13.500 8 11 5.500 7.500 5.700 4 6 1.500 7.500.5 9z" fill="#40c3b0"/><path d="M13 2c4 1 6.700 3.500 6.700 6.300 0 3.200-2.500 5-5.200 5 2-3 1-8-1.500-11.300z" fill="#70d968"/><path d="M8 9.500c-1 4 2 7.500 6 7.500 1.500 0 3-.5 4-1-3 4-10 4-12.500 0C4 13 5 10 8 9.500z" fill="#0d4f9e"/><path d="M8.500 9c1.500-1.200 4-.6 4 1.300 0 1-1 1.600-.3 2.400 1.300 1.400 4.500.8 6.500-.7-1 3.500-8 4.500-10 1-.8-1.400-.8-3-.2-4z" fill="#d7e9ec"/></svg><span class="w-[34px] h-[2px] mt-auto bg-[#1a7dc4]"></span></div>
    <div class="flex flex-col items-center w-[41px] h-[33px] pt-[7px]"><svg class="w-[18px] h-[18px]" viewBox="0 0 18 18"><path d="M1 1h7l1 2h8v12H1z" fill="#f5c64f"/><path d="M1 1h7v3H1z" fill="#c9922c"/><path d="M1 6h16v10H1z" fill="#fbdb7b"/><path d="M4 16.500V9h10v7.500h-3V12H7v4.500z" fill="#5d9cc4"/></svg><span class="w-[34px] h-[2px] mt-auto bg-[#1a7dc4]"></span></div>
    <div class="flex items-center justify-center w-[42px]"><svg class="w-[20px] h-[20px]" viewBox="0 0 20 20"><path d="M0 7l10-7 10 7z" fill="#175a9c"/><path d="M0 7h20v12H0z" fill="#3aaee4"/><path d="M1.500 7h17L10 13z" fill="#f2f6f8"/><path d="M0 8l10 6 10-6v11H0z" fill="#40b8ea"/><path d="M20 8v11L8 13z" fill="#2b95d6"/></svg></div>
    <div class="flex items-center justify-center w-[41px]"><svg class="w-[20px] h-[20px]" viewBox="0 0 20 20"><ellipse cx="9" cy="6" rx="8" ry="5.500" fill="#f4eef0" stroke="#d4727f" transform="rotate(-12 9 6)"/><path d="M9 3l3 10M4 9l9-5" stroke="#9aa1a8" stroke-width="1.300"/><g fill="none" stroke="#3a96c8" stroke-width="1.400"><circle cx="12" cy="16" r="2.300"/><circle cx="16.500" cy="13" r="2.300"/></g></svg></div>
    <div class="flex flex-col items-center w-[42px] h-[33px] pt-[7px]"><svg class="w-[19px] h-[18px]" viewBox="0 0 19 18"><path d="M9 2h9.500v14H9z" fill="#fff" stroke="#2b579a"/><path d="M11 5h6M11 7.500h6M11 10h6M11 12.500h6" stroke="#2b579a"/><path d="M0 2l11-2v18L0 16z" fill="#2b579a"/><text x="5.500" y="12.500" font-size="9" font-weight="700" text-anchor="middle" letter-spacing="0" fill="#fff">W</text></svg><span class="w-[34px] h-[2px] mt-auto bg-[#1a7dc4]"></span></div>
    <div class="flex flex-col items-center w-[41px] h-[33px] pt-[6px] bg-[#eef4f7]"><div class="flex flex-col items-center justify-center w-[18px] h-[20px] rounded-[2px] bg-[#c3124c] text-white font-bold tracking-normal"><span class="text-[10px]">A</span><span class="w-full mt-[2px] pt-px bg-[#7c0a35] text-center text-[4.5px]">CAD</span></div><span class="w-[41px] h-[2px] mt-auto bg-[#1a7dc4]"></span></div>
    <div class="flex flex-col items-center w-[42px] h-[33px] pt-[6px]"><svg class="w-[19px] h-[20px]" viewBox="0 0 19 20"><circle cx="9" cy="9.500" r="8.800" fill="#23201f"/><path d="M5 4c0 3 2 4 4 4 2-1 5-1 6 2M9 8c-1 2-1 5-5 5" fill="none" stroke="#c9cdd1" stroke-width="1.300"/><circle cx="13.500" cy="14" r="5" fill="#f20d0d"/></svg><span class="w-[34px] h-[2px] mt-auto bg-[#1a7dc4]"></span></div>

    <!-- Tray -->
    <svg class="w-[20px] h-[14px] ml-[178px]" viewBox="0 0 20 14"><path d="M5 13a4.300 4.300 0 0 1 0-8.500A6 6 0 0 1 16 5.500a4 4 0 0 1 0 7.500z" fill="#8fb4ea"/><path d="M5 12.500a4 4 0 0 1 0-7.500c3 0 4 2 5 4s5 1 9 1c-.5 2-1.500 2.500-3 2.500z" fill="#c8dcf7"/></svg>
    <span class="w-[32px] ml-[7px] text-[12px] tracking-[-0.3px]">20°C</span><span class="w-[57px] text-[12px] tracking-[-0.15px]">Cloudy</span>
    <svg class="w-[11px] h-[7px]" viewBox="0 0 11 7"><path d="M.5 6l5-5 5 5" fill="none" stroke="#222" stroke-width="1.200"/></svg>
    <svg class="w-[14px] h-[12px] ml-[8px]" viewBox="0 0 14 12"><path d="M3.500 3.500h9v6h-9z" fill="none" stroke="#222"/><path d="M5 5h4.500v3.500H5zM12.500 5h1.500v3h-1.500zM0 1h5v4H3v2H2V5H0z" fill="#222"/></svg>
    <svg class="w-[12px] h-[13px] ml-[7px]" viewBox="0 0 12 13"><path d="M1.500 3.500h7v6h-7zM8.500 5l3-1v5l-3-1M3 1.500C5 .5 7 .5 9 1.500M3 11.500c2 1 4 1 6 0" fill="none" stroke="#222"/></svg>
    <svg class="w-[9px] h-[13px] ml-[8px]" viewBox="0 0 9 13"><path d="M2 2a2 2 0 0 1 5 0v5.500H2zM0 6h1.200v3h6.600V6H9v4H5v2h2v1H2v-1h2v-2H0z" fill="#111"/></svg>
    <svg class="w-[12px] h-[12px] ml-[10px]" viewBox="0 0 12 12"><path d="M1 11.500C1 5 5 1 11.500 1M4 11.500C4 7 7 4 11.500 4M7 11.500C7 9 9 7 11.500 7" fill="none" stroke="#6a7076"/><circle cx="10.500" cy="10.500" r="1.300" fill="#222"/></svg>
    <svg class="w-[14px] h-[12px] ml-[7px]" viewBox="0 0 14 12"><path d="M.5 4h2L5.500 1v10l-3-3h-2z" fill="none" stroke="#222"/><path d="M7.500 4.500v3" stroke="#222"/><path d="M9.500 3c1 2 1 4 0 6M12 1.500c1.500 3 1.500 6 0 9" fill="none" stroke="#8d949c"/></svg>
    <span class="w-[26px] ml-[9px] whitespace-nowrap">ENG</span>
    <div class="flex flex-col items-center w-[52px] pb-px leading-[15px] tracking-[-0.3px] whitespace-nowrap"><span>8:29 AM</span><span>10/16/2022</span></div>
    <div class="relative w-[20px] h-[20px] ml-[11px]">
      <svg class="w-[14px] h-[14px]" viewBox="0 0 14 14"><path d="M0 0h13.500v10H6l-3 3v-3H0z" fill="#111"/><path d="M2.500 3h8.500M2.500 5.200h8.500M2.500 7.400h5" stroke="#d9deea" stroke-width=".9"/></svg>
      <span class="absolute left-[7px] top-[6px] flex items-center justify-center w-[13px] h-[13px] rounded-full border border-[#7e858c] bg-[#d3d8e2] text-[9px] tracking-normal">7</span>
    </div>
    <span class="w-px h-[33px] ml-auto mr-[3px] bg-[#b5bcc8]"></span>
  </footer>
</body>
</html>
